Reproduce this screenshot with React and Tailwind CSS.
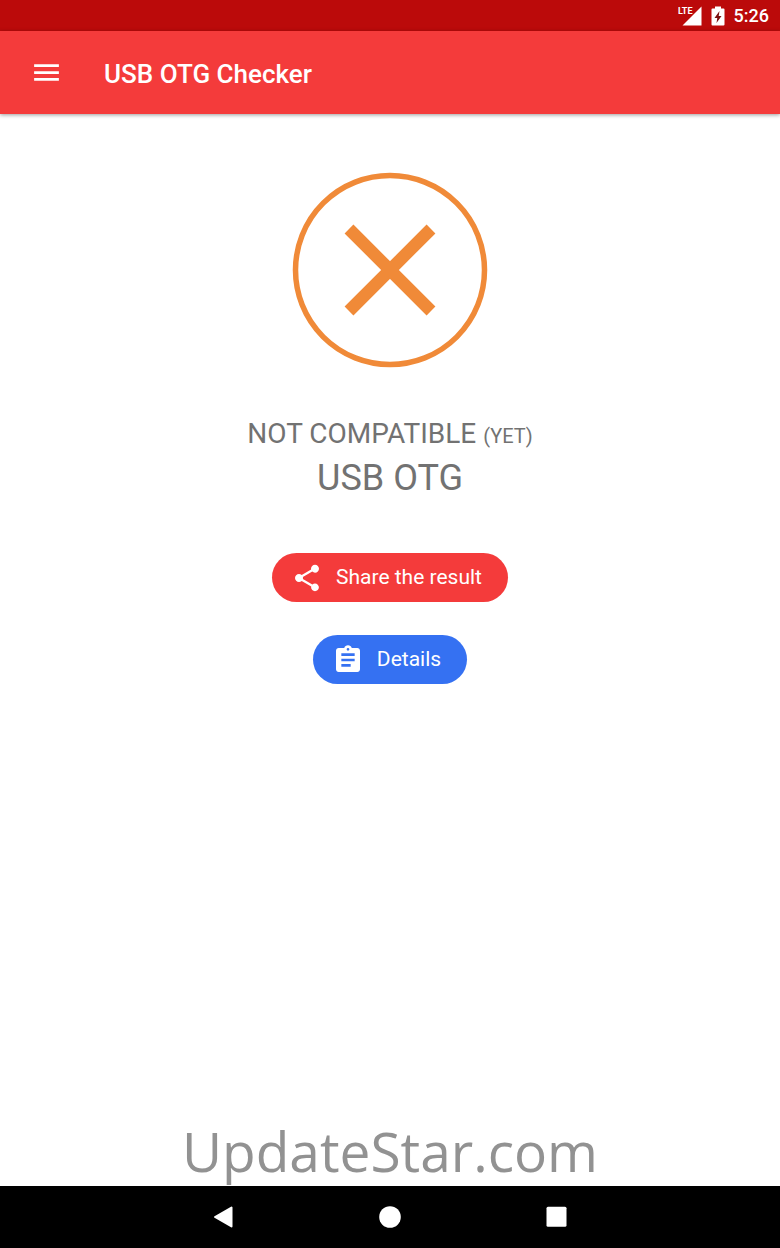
import { MdAssignment, MdMenu, MdShare } from 'react-icons/md'

const StatusBar = () => (
  <div className="flex h-[31px] items-center justify-end gap-2 bg-[#bb0a0a] pr-[11px] text-white">
    {/* Signal */}
    <svg className="h-5 w-6" viewBox="0 0 24 20">
      <path d="M23.5 0.5V19.5H4.5Z" fill="currentColor" />
      <path d="M0 0H13.5V10H0Z" fill="#bb0a0a" />
      <text x="0" y="8" fill="currentColor" className="font-['Liberation_Sans_Narrow','Roboto',sans-serif] text-[9px] font-bold">
        LTE
      </text>
    </svg>
    {/* Battery */}
    <svg className="h-5 w-4" viewBox="0 0 16 20" aria-hidden="true">
      <path d="M5 0.5H11V2.500H13.500Q14.500 2.500 14.500 3.500V18.500Q14.500 19.500 13.500 19.500H2.500Q1.500 19.500 1.500 18.500V3.500Q1.500 2.500 2.500 2.500H5Z" fill="currentColor" />
      <path d="M9.500 5L4.500 12H7.300L6.500 17L11.500 10H8.700Z" fill="#7a1010" />
    </svg>
    <span className="text-lg font-medium">5:26</span>
  </div>
)

const AppBar = () => (
  <header className="relative flex h-[83px] items-center bg-[#f43b3b] pl-[30px] text-white shadow-[0_1px_4px_rgba(0,0,0,0.4)]">
    <button type="button" aria-label="Menu" className="mr-[41px] size-[33px]">
      <MdMenu className="size-full" />
    </button>
    <h1 className="pt-1 text-[26px] font-medium">USB OTG Checker</h1>
  </header>
)

const PillButton = ({ icon: Icon, className, children }) => (
  <button
    type="button"
    className={`flex h-[49px] items-center gap-[13px] rounded-full pr-[26px] pl-[19px] text-[21px] text-white ${className}`}
  >
    <Icon className="size-8" />
    {children}
  </button>
)

const NavBar = () => (
  <nav className="flex h-[62px] items-center justify-center gap-[143px] bg-black text-white">
    <button type="button" aria-label="Back" className="size-6">
      <svg className="size-full" viewBox="0 0 24 24">
        <path d="M4 12L20.500 2.500V21.500Z" fill="currentColor" stroke="currentColor" strokeWidth="2" strokeLinejoin="round" />
      </svg>
    </button>
    <button type="button" aria-label="Home" className="size-6">
      <svg className="size-full" viewBox="0 0 24 24">
        <circle cx="12" cy="12" r="10.8" fill="currentColor" />
      </svg>
    </button>
    <button type="button" aria-label="Recent apps" className="size-6">
      <svg className="size-full" viewBox="0 0 24 24">
        <rect x="1.5" y="1.8" width="20" height="20" rx="1.5" fill="currentColor" />
      </svg>
    </button>
  </nav>
)

const App = () => {
  return (
    <div className="flex min-h-screen flex-col bg-white font-[Roboto,sans-serif]">
      <StatusBar />
      <AppBar />

      <main className="flex flex-1 flex-col items-center pt-[58px]">
        <svg className="size-[196px]" viewBox="0 0 196 196" fill="none" stroke="#f08a38" aria-hidden="true">
          <circle cx="98" cy="98" r="94.5" strokeWidth="5.5" />
          <path d="M57 57L139 139M139 57L57 139" strokeWidth="12.5" />
        </svg>

        {/* Result */}
        <div className="mt-11 text-center text-[#727272]">
          <p className="text-[28px] leading-[44px]">
            NOT COMPATIBLE <span className="text-xl">(YET)</span>
          </p>
          <p className="text-4xl leading-[44px]">USB OTG</p>
        </div>

        <div className="mt-[53px] flex flex-col items-center gap-[33px]">
          <PillButton icon={MdShare} className="bg-[#f43b3b]">Share the result</PillButton>
          <PillButton icon={MdAssignment} className="bg-[#3571f2]">Details</PillButton>
        </div>

        <p className="mt-auto font-['Open_Sans',sans-serif] text-[55px] leading-[70px] text-[#929292]">
          UpdateStar.com
        </p>
      </main>

      <NavBar />
    </div>
  )
}

export default App
